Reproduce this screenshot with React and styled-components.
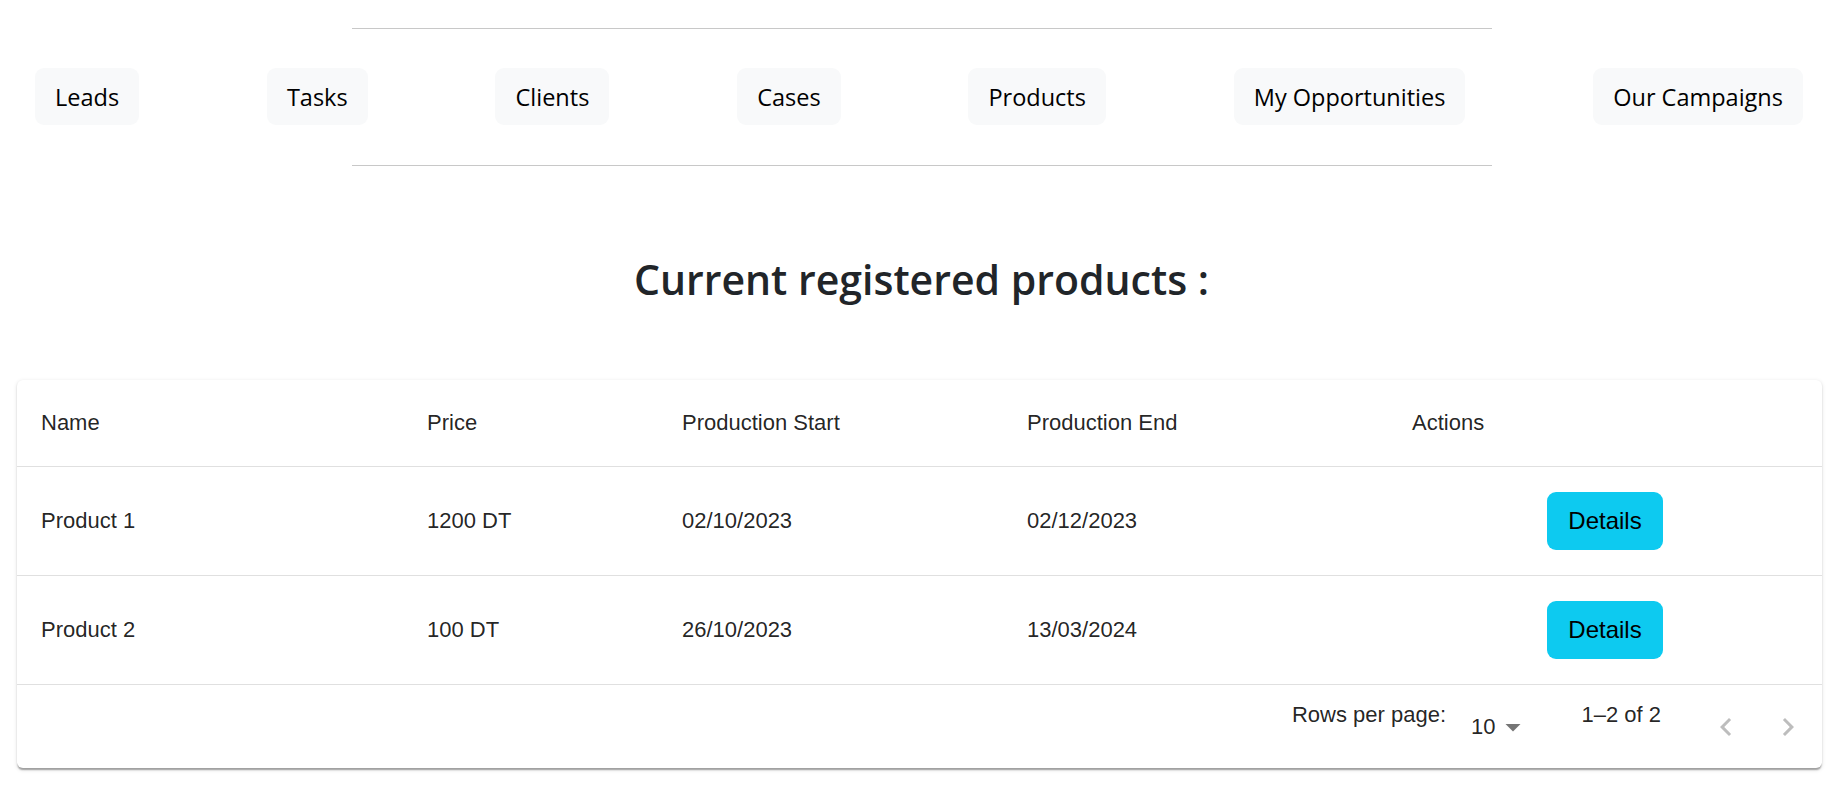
import React from 'react';
import styled, { createGlobalStyle } from 'styled-components';

const GlobalStyle = createGlobalStyle`
  body {
    margin: 0;
    background: #fff;
    font-family: "Open Sans", "Noto Sans", sans-serif;
    color: #212529;
  }
`;

const Page = styled.div`
  padding: 28px 0 21px;
`;

const Divider = styled.hr`
  width: 1140px;
  margin: 0 auto;
  border: 0;
  border-top: 1px solid #c8c8c8;
`;

const NavBar = styled.nav`
  display: flex;
  justify-content: space-between;
  align-items: center;
  padding: 39px 40px 40px 35px;
`;

const NavButton = styled.a`
  display: inline-block;
  padding: 10.5px 20px;
  font-size: 23.5px;
  line-height: 36px;
  color: #000;
  background: #f8f9fa;
  border-radius: 9px;
  text-decoration: none;
  cursor: pointer;
`;

const Title = styled.h3`
  margin: 89px 0 76px;
  text-align: center;
  font-size: 41px;
  font-weight: 600;
  line-height: 1.2;
  color: #212529;
`;

const TableSection = styled.div`
  padding: 0 21px 0 17px;
`;

const Card = styled.div`
  background: #fff;
  border-radius: 6px;
  overflow: hidden;
  box-shadow: 0 3px 1.5px -1.5px rgba(0, 0, 0, 0.2),
    0 1.5px 1.5px 0 rgba(0, 0, 0, 0.14), 0 1.5px 4.5px 0 rgba(0, 0, 0, 0.12);
  font-family: "Liberation Sans", Arial, sans-serif;
  color: rgba(0, 0, 0, 0.87);
`;

const Table = styled.table`
  width: 100%;
  border-collapse: collapse;
  table-layout: fixed;
`;

const Col = styled.col`
  width: ${(p) => p.$w}px;
`;

const HeadCell = styled.th`
  text-align: left;
  font-weight: 400;
  font-size: 22px;
  line-height: 36px;
  padding: 25px 24px;
  border-bottom: 1px solid #e0e0e0;
`;

const Cell = styled.td`
  text-align: ${(p) => (p.$center ? 'center' : 'left')};
  font-size: 22px;
  line-height: 30px;
  padding: 25px 24px;
  border-bottom: 1px solid #e0e0e0;
  vertical-align: middle;
`;

const DetailsButton = styled.button`
  font-family: "Liberation Sans", Arial, sans-serif;
  font-size: 24px;
  line-height: 36px;
  padding: 11px 21px;
  border: 0;
  border-radius: 9px;
  background: #0dcaf0;
  color: #000;
  cursor: pointer;
`;

const Footer = styled.div`
  display: flex;
  justify-content: flex-end;
  align-items: center;
  height: 83px;
  padding-right: 4px;
  font-size: 22px;
`;

const Label = styled.p`
  margin: 0 0 24px ${(p) => p.$gap || 0}px;
  line-height: 30px;
`;

const Select = styled.div`
  display: flex;
  align-items: center;
  margin-left: 25px;
  line-height: 30px;

  svg {
    width: 36px;
    height: 36px;
    fill: rgba(0, 0, 0, 0.54);
  }
`;

const Actions = styled.div`
  display: flex;
  gap: 2px;
  margin-left: 35px;
`;

const IconButton = styled.button`
  display: flex;
  padding: 12px;
  border: 0;
  background: transparent;

  svg {
    width: 36px;
    height: 36px;
    fill: rgba(0, 0, 0, 0.26);
  }
`;

const links = ['Leads', 'Tasks', 'Clients', 'Cases', 'Products', 'My Opportunities', 'Our Campaigns'];

const products = [
  { name: 'Product 1', price: '1200 DT', start: '02/10/2023', end: '02/12/2023' },
  { name: 'Product 2', price: '100 DT', start: '26/10/2023', end: '13/03/2024' },
];

export default function App() {
  return (
    <Page>
      <GlobalStyle />
      <Divider />
      <NavBar>
        {links.map((l) => (
          <NavButton key={l}>{l}</NavButton>
        ))}
      </NavBar>
      <Divider />

      <Title>Current registered products :</Title>

      <TableSection>
        <Card>
          <Table>
            <colgroup>
              <Col $w={386} />
              <Col $w={255} />
              <Col $w={345} />
              <Col $w={385} />
              <Col $w={434} />
            </colgroup>
            <thead>
              <tr>
                <HeadCell>Name</HeadCell>
                <HeadCell>Price</HeadCell>
                <HeadCell>Production Start</HeadCell>
                <HeadCell>Production End</HeadCell>
                <HeadCell>Actions</HeadCell>
              </tr>
            </thead>
            <tbody>
              {products.map((p) => (
                <tr key={p.name}>
                  <Cell>{p.name}</Cell>
                  <Cell>{p.price}</Cell>
                  <Cell>{p.start}</Cell>
                  <Cell>{p.end}</Cell>
                  <Cell $center>
                    <DetailsButton>Details</DetailsButton>
                  </Cell>
                </tr>
              ))}
            </tbody>
          </Table>
          <Footer>
            <Label>Rows per page:</Label>
            <Select>
              <span>10</span>
              <svg viewBox="0 0 24 24"><path d="M7 10l5 5 5-5z" /></svg>
            </Select>
            <Label $gap={50}>1–2 of 2</Label>
            <Actions>
              <IconButton aria-label="previous page">
                <svg viewBox="0 0 24 24"><path d="M15.41 16.59 10.83 12l4.58-4.59L14 6l-6 6 6 6 1.41-1.41z" /></svg>
              </IconButton>
              <IconButton aria-label="next page">
                <svg viewBox="0 0 24 24"><path d="M8.59 16.59 13.17 12 8.59 7.41 10 6l6 6-6 6-1.41-1.41z" /></svg>
              </IconButton>
            </Actions>
          </Footer>
        </Card>
      </TableSection>
    </Page>
  );
}
